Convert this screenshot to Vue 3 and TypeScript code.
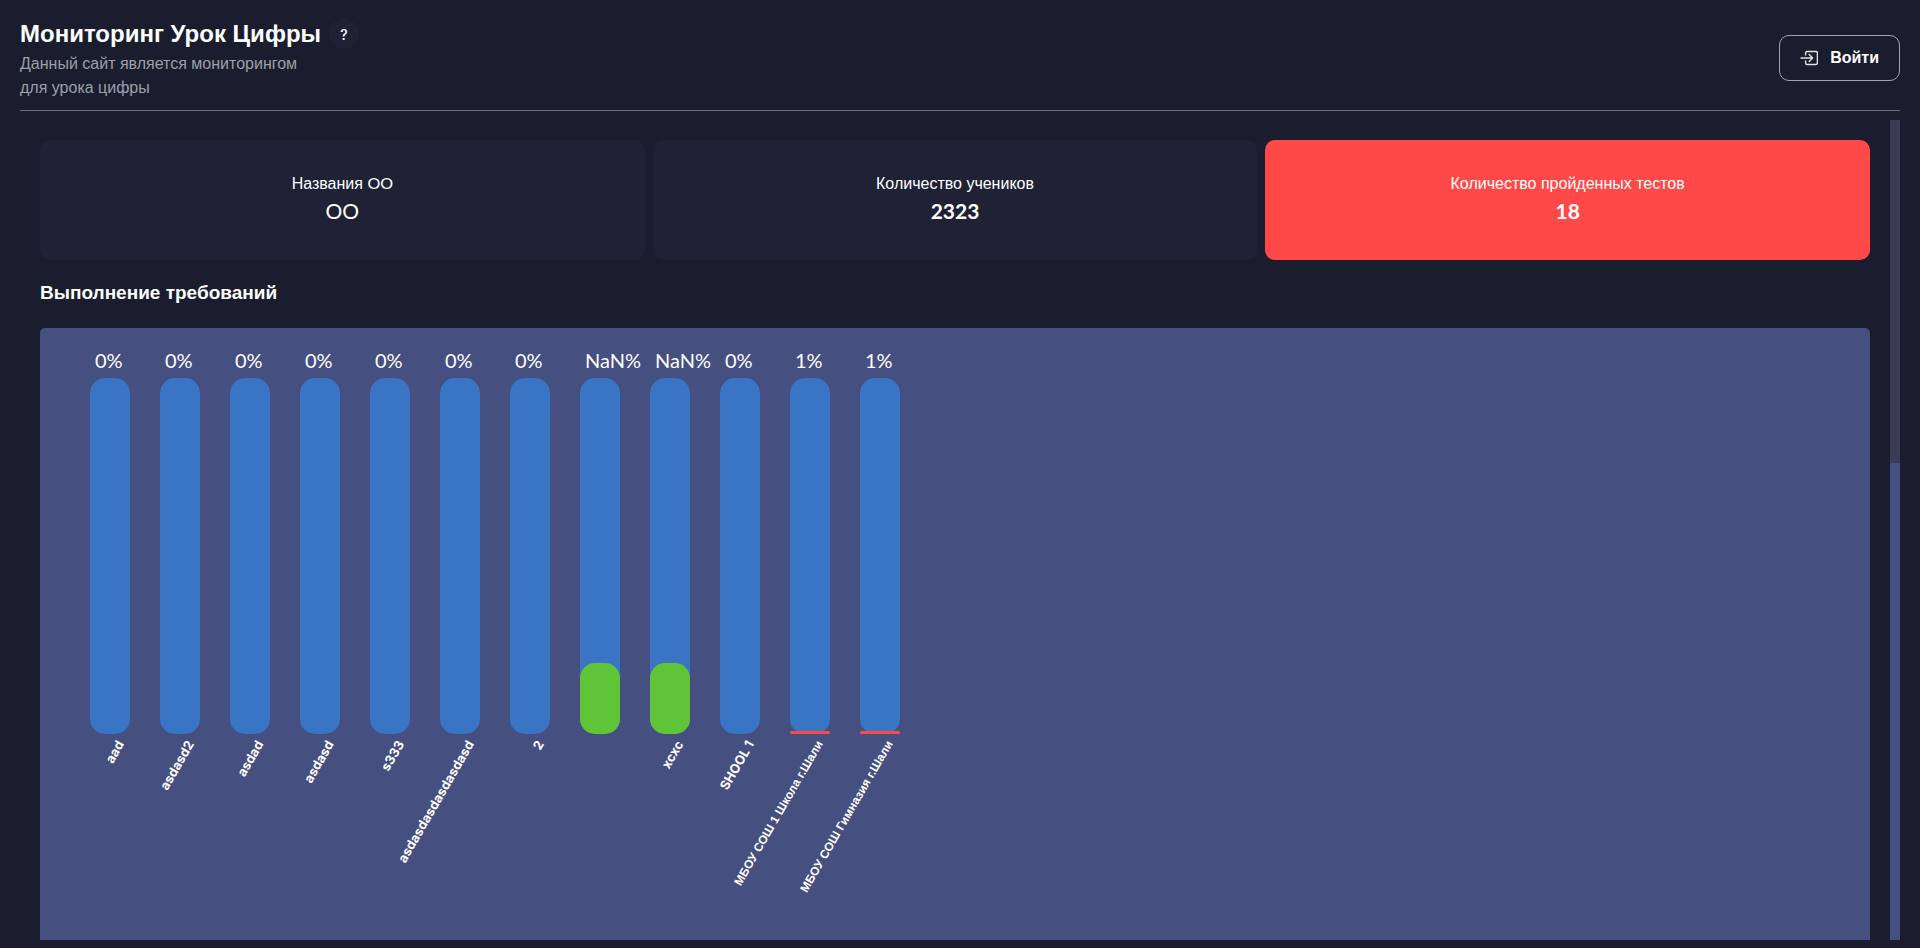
<script setup lang="ts">
import { computed, onBeforeUnmount, onMounted, ref } from 'vue'

interface Stat {
  label: string
  suffix?: string
  value: string
  accent?: boolean
  regular?: boolean
}

interface School {
  name: string
  percent: string
  fill: number
  color: 'green' | 'red'
  cyrillic?: boolean
}

const BAR_HEIGHT = 356

const stats: Stat[] = [
  { label: 'Названия', suffix: 'OO', value: 'OO', regular: true },
  { label: 'Количество учеников', value: '2323' },
  { label: 'Количество пройденных тестов', value: '18', accent: true },
]

const schools: School[] = [
  { name: 'aad', percent: '0%', fill: 0, color: 'red' },
  { name: 'asdasd2', percent: '0%', fill: 0, color: 'red' },
  { name: 'asdad', percent: '0%', fill: 0, color: 'red' },
  { name: 'asdasd', percent: '0%', fill: 0, color: 'red' },
  { name: 's333', percent: '0%', fill: 0, color: 'red' },
  { name: 'asdasdasdasdasdasd', percent: '0%', fill: 0, color: 'red' },
  { name: '2', percent: '0%', fill: 0, color: 'red' },
  { name: '', percent: 'NaN%', fill: 20, color: 'green' },
  { name: 'xcxc', percent: 'NaN%', fill: 20, color: 'green' },
  { name: 'SHOOL 1', percent: '0%', fill: 0, color: 'red' },
  { name: 'МБОУ СОШ 1 Школа г.Шали', percent: '1%', fill: 1, color: 'red', cyrillic: true },
  { name: 'МБОУ СОШ Гимназия г.Шали', percent: '1%', fill: 1, color: 'red', cyrillic: true },
]

const fillHeight = (percent: number): string => `${Math.floor((BAR_HEIGHT * percent) / 100)}px`

const content = ref<HTMLElement | null>(null)
const viewHeight = ref(1)
const fullHeight = ref(1)
const scrollTop = ref(0)

function measure(): void {
  const el = content.value
  if (!el) return
  viewHeight.value = el.clientHeight
  fullHeight.value = el.scrollHeight
  scrollTop.value = el.scrollTop
}

const thumbStyle = computed(() => ({
  height: `${(100 * viewHeight.value) / fullHeight.value}%`,
  marginTop: `${Math.round((viewHeight.value * scrollTop.value) / fullHeight.value)}px`,
}))

onMounted(() => {
  measure()
  window.addEventListener('resize', measure)
})

onBeforeUnmount(() => window.removeEventListener('resize', measure))
</script>

<template>
  <div class="page">
    <header class="header">
      <div class="intro">
        <div class="title-row">
          <h1 class="title">Мониторинг Урок Цифры</h1>
          <button class="help" type="button">?</button>
        </div>
        <p class="subtitle">Данный сайт является мониторингом для урока цифры</p>
      </div>
      <button class="login" type="button">
        <svg class="login-icon" viewBox="0 0 18 16" aria-hidden="true">
          <path d="M5.6 5V3.1A1.6 1.6 0 0 1 7.2 1.5h8.6a1.6 1.6 0 0 1 1.6 1.6v9.8a1.6 1.6 0 0 1-1.6 1.6H7.2a1.6 1.6 0 0 1-1.6-1.6V11" />
          <path d="M1 8H12.4M9.2 4.6L12.6 8l-3.4 3.4" />
        </svg>
        Войти
      </button>
    </header>

    <div class="body">
      <main ref="content" class="content" @scroll="measure">
        <section class="stats">
          <article v-for="stat in stats" :key="stat.label" class="stat" :class="{ accent: stat.accent }">
            <span class="stat-label">{{ stat.label }}<template v-if="stat.suffix">&nbsp;<span class="latin">{{ stat.suffix }}</span></template></span>
            <span class="stat-value" :class="{ regular: stat.regular }">{{ stat.value }}</span>
          </article>
        </section>

        <h2 class="section-title">Выполнение требований</h2>

        <section class="chart">
          <div v-for="school in schools" :key="school.name" class="column">
            <span class="percent">{{ school.percent }}</span>
            <div class="bar">
              <div v-if="school.fill" class="fill" :class="school.color" :style="{ height: fillHeight(school.fill) }"></div>
            </div>
            <div class="caption">
              <span class="name" :class="{ cyrillic: school.cyrillic }">{{ school.name }}</span>
            </div>
          </div>
        </section>
      </main>
      <div class="scrollbar" aria-hidden="true">
        <div class="thumb" :style="thumbStyle"></div>
      </div>
    </div>
  </div>
</template>

<style>
body {
  margin: 0;
  background: #1a1d2d;
}
</style>

<style scoped>
.page {
  box-sizing: border-box;
  display: flex;
  flex-direction: column;
  height: 100vh;
  padding: 16px 20px 8px;
  background: #1a1d2d;
  color: #fff;
  font-family: "Liberation Sans", Arial, sans-serif;
  font-size: 16px;
}

.header {
  display: flex;
  align-items: center;
  justify-content: space-between;
  padding-bottom: 10px;
  border-bottom: 1px solid #6c6e7b;
}

.title-row {
  display: flex;
  align-items: center;
  gap: 8px;
}

.title {
  margin: 0;
  font-size: 24px;
  line-height: 36px;
}

.help {
  width: 30px;
  height: 30px;
  padding: 0;
  border: 0;
  border-radius: 50%;
  background: #1e2234;
  color: #fff;
  font: 500 14px "Inter", sans-serif;
}

.subtitle {
  max-width: 300px;
  margin: 0;
  color: #9ba0aa;
  line-height: 24px;
}

.login {
  display: flex;
  align-items: center;
  gap: 12px;
  height: 46px;
  padding: 0 20px;
  border: 1px solid #a3a5ad;
  border-radius: 10px;
  background: transparent;
  color: #fff;
  font: 700 16px "Liberation Sans", Arial, sans-serif;
}

.login-icon {
  width: 18px;
  height: 16px;
  fill: none;
  stroke: #e2e3e6;
  stroke-width: 1.4;
  stroke-linecap: round;
  stroke-linejoin: round;
}

.body {
  display: flex;
  flex: 1;
  min-height: 0;
  margin-top: 9px;
}

.content {
  flex: 1;
  min-width: 0;
  padding: 20px;
  overflow-y: auto;
  scrollbar-width: none;
}

.scrollbar {
  flex: none;
  width: 10px;
  overflow: hidden;
  background: #454f80;
}

.thumb {
  background: #3a3c55;
}

.stats {
  display: grid;
  grid-template-columns: repeat(3, 1fr);
  gap: 8px;
}

.stat {
  display: flex;
  flex-direction: column;
  align-items: center;
  justify-content: center;
  height: 120px;
  border-radius: 10px;
  background: #1e2234;
}

.stat.accent {
  background: #ff4949;
}

.stat-label {
  line-height: 22px;
}

.latin {
  font-family: "Lato", sans-serif;
  line-height: 16px;
}

.stat-value {
  font: 700 21px/32px "Lato", sans-serif;
}

.stat-value.regular {
  font-weight: 400;
}

.section-title {
  margin: 20px 0 22px;
  font-size: 19px;
  line-height: 26px;
}

.chart {
  box-sizing: border-box;
  display: flex;
  align-items: flex-start;
  gap: 30px;
  min-height: 1732px;
  padding: 20px 50px;
  border-radius: 5px;
  background: #454f80;
}

.column {
  flex: none;
  width: 40px;
}

.percent {
  display: block;
  padding: 0 0 6px 5px;
  font: 400 20px/24px "Lato", sans-serif;
}

.bar {
  display: flex;
  align-items: flex-end;
  height: 356px;
  border-radius: 15px;
  background: #3974c5;
}

.fill {
  width: 100%;
  border-radius: 15px;
}

.green {
  background: #60c438;
}

.red {
  background: #ff4949;
  border-radius: 2px;
}

.caption {
  display: flex;
  justify-content: flex-end;
  padding: 3px 18px 0 0;
}

.name {
  font: 700 13px/18px "Inter", sans-serif;
  white-space: nowrap;
  transform: rotate(-60deg);
  transform-origin: top right;
}

.name.cyrillic {
  font-family: "Liberation Sans", Arial, sans-serif;
  font-size: 12px;
}
</style>
